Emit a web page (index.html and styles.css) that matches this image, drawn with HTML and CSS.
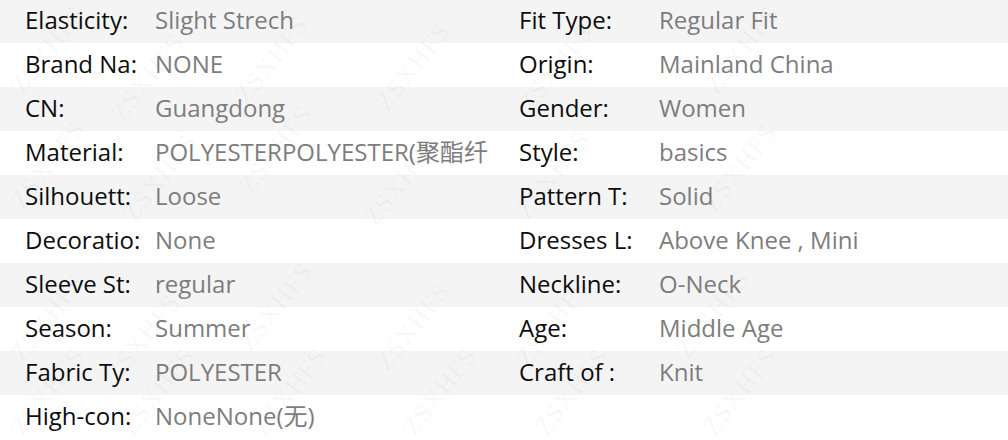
FILE: index.html
```html
<!DOCTYPE html>
<html lang="en">
<head>
<meta charset="utf-8">
<title>Specs</title>
<link rel="stylesheet" href="styles.css">
</head>
<body>
<div class="page">
  <div class="specs">
    <div class="row alt"><span class="lbl">Elasticity:</span><span class="val">Slight Strech</span><span class="lbl lbl2">Fit Type:</span><span class="val">Regular Fit</span></div>
    <div class="row"><span class="lbl">Brand Na:</span><span class="val">NONE</span><span class="lbl lbl2">Origin:</span><span class="val">Mainland China</span></div>
    <div class="row alt"><span class="lbl">CN:</span><span class="val">Guangdong</span><span class="lbl lbl2">Gender:</span><span class="val">Women</span></div>
    <div class="row"><span class="lbl">Material:</span><span class="val">POLYESTERPOLYESTER(聚酯纤</span><span class="lbl lbl2">Style:</span><span class="val">basics</span></div>
    <div class="row alt"><span class="lbl">Silhouett:</span><span class="val">Loose</span><span class="lbl lbl2">Pattern T:</span><span class="val">Solid</span></div>
    <div class="row"><span class="lbl">Decoratio:</span><span class="val">None</span><span class="lbl lbl2">Dresses L:</span><span class="val">Above Knee , Mini</span></div>
    <div class="row alt"><span class="lbl">Sleeve St:</span><span class="val">regular</span><span class="lbl lbl2">Neckline:</span><span class="val">O-Neck</span></div>
    <div class="row"><span class="lbl">Season:</span><span class="val">Summer</span><span class="lbl lbl2">Age:</span><span class="val">Middle Age</span></div>
    <div class="row alt"><span class="lbl">Fabric Ty:</span><span class="val">POLYESTER</span><span class="lbl lbl2">Craft of :</span><span class="val">Knit</span></div>
    <div class="row"><span class="lbl">High-con:</span><span class="val">NoneNone(无)</span><span class="lbl lbl2"></span><span class="val"></span></div>
  </div>
  <div class="wm" aria-hidden="true">
    <span class="mark m1">ZSXHFS</span>
    <span class="mark m2">ZSXHFS</span>
    <span class="mark m3">ZSXHFS</span>
    <span class="mark m4">ZSXHFS</span>
    <span class="mark m5">ZSXHFS</span>
    <span class="mark m6">ZSXHFS</span>
    <span class="mark m7">ZSXHFS</span>
    <span class="mark m8">ZSXHFS</span>
    <span class="mark m9">ZSXHFS</span>
    <span class="mark m10">ZSXHFS</span>
    <span class="mark m11">ZSXHFS</span>
    <span class="mark m12">ZSXHFS</span>
    <span class="mark m13">ZSXHFS</span>
    <span class="mark m14">ZSXHFS</span>
    <span class="mark m15">ZSXHFS</span>
    <span class="mark m16">ZSXHFS</span>
    <span class="mark m17">ZSXHFS</span>
    <span class="mark m18">ZSXHFS</span>
    <span class="mark m19">ZSXHFS</span>
    <span class="mark m20">ZSXHFS</span>
    <span class="mark m21">ZSXHFS</span>
    <span class="mark m22">ZSXHFS</span>
    <span class="mark m23">ZSXHFS</span>
    <span class="mark m24">ZSXHFS</span>
  </div>
</div>
</body>
</html>
```

FILE: styles.css
```css
html, body {
  margin: 0;
  padding: 0;
  background: #ffffff;
}

body {
  width: 1008px;
  height: 440px;
  overflow: hidden;
  font-family: "Open Sans", "Noto Sans", "Noto Sans CJK SC", sans-serif;
  font-size: 24px;
}

.page {
  position: relative;
  width: 1008px;
  height: 440px;
  overflow: hidden;
}

.specs {
  display: flex;
  flex-direction: column;
  margin-top: -1px;
}

.row {
  display: grid;
  grid-template-columns: 130px 350px 154px 1fr;
  height: 44px;
  line-height: 42px;
  padding-left: 25px;
  background: #ffffff;
}

.row.alt {
  background: #f4f4f4;
}

.lbl {
  color: #0d0d0d;
  white-space: nowrap;
  overflow: hidden;
}

.lbl2 {
  padding-left: 14px;
}

.val {
  color: #7d7d7d;
  white-space: nowrap;
  overflow: hidden;
}

.wm {
  position: absolute;
  inset: 0;
  pointer-events: none;
}

.mark {
  position: absolute;
  font-family: "Liberation Serif", serif;
  font-size: 26px;
  letter-spacing: 1px;
  color: rgba(0, 0, 0, 0.045);
  transform: translate(-50%, -50%) rotate(-52deg);
  white-space: nowrap;
  line-height: 1;
}

.m1 { left: 48px; top: 50px; }
.m2 { left: 148px; top: 78px; }
.m3 { left: 272px; top: 60px; }
.m4 { left: 413px; top: 67px; }
.m5 { left: 556px; top: 68px; }
.m6 { left: 742px; top: 50px; }
.m7 { left: 48px; top: 165px; }
.m8 { left: 160px; top: 178px; }
.m9 { left: 276px; top: 150px; }
.m10 { left: 401px; top: 182px; }
.m11 { left: 553px; top: 175px; }
.m12 { left: 740px; top: 168px; }
.m13 { left: 48px; top: 318px; }
.m14 { left: 143px; top: 338px; }
.m15 { left: 276px; top: 307px; }
.m16 { left: 413px; top: 327px; }
.m17 { left: 553px; top: 323px; }
.m18 { left: 713px; top: 315px; }
.m19 { left: 48px; top: 392px; }
.m20 { left: 158px; top: 392px; }
.m21 { left: 290px; top: 392px; }
.m22 { left: 440px; top: 392px; }
.m23 { left: 572px; top: 392px; }
.m24 { left: 740px; top: 392px; }
```
